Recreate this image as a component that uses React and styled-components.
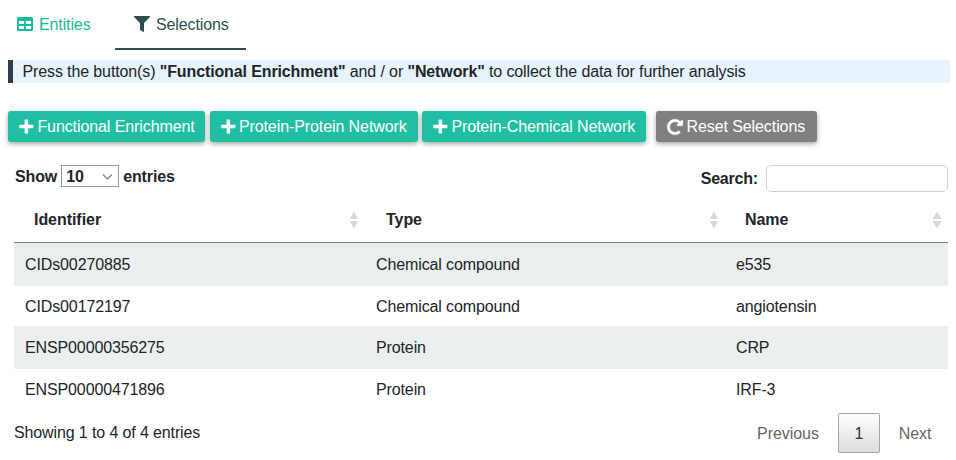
import React from 'react';
import styled, { createGlobalStyle } from 'styled-components';
import { FaFilter, FaRedoAlt } from 'react-icons/fa';

const GlobalStyle = createGlobalStyle`
  *, *::before, *::after { box-sizing: border-box; }
  body {
    margin: 0;
    background: #fff;
    color: #212529;
    font: 16px/24px "Liberation Sans", Arial, sans-serif;
    letter-spacing: -0.12px;
  }
`;

const Page = styled.main`
  width: 956px;
  height: 460px;
  overflow: hidden;
  padding-right: 6px;
  padding-left: 8px;
`;

const Tabs = styled.nav`
  display: flex;
  height: 50px;
`;

const Tab = styled.a`
  display: flex;
  align-items: center;
  gap: 6px;
  width: ${(p) => p.$width}px;
  padding: 1px 0 0 ${(p) => p.$inset}px;
  border-bottom: 2.5px solid ${(p) => (p.$active ? '#2f4f4f' : 'transparent')};
  color: ${(p) => (p.$active ? '#2f4f4f' : '#18bc9c')};
  svg { flex: none; margin-bottom: 1px; }
`;

const Notice = styled.p`
  height: 23px;
  margin: 10px 0 28px;
  padding-left: 9.5px;
  border-left: 5px solid #2c3e50;
  background: #e7f3fe;
  line-height: 23px;
  white-space: pre;
`;

const Actions = styled.div`
  display: flex;
  gap: 4.5px;
`;

const Button = styled.button`
  display: flex;
  align-items: center;
  gap: ${(p) => (p.$muted ? 4 : 3.4)}px;
  width: ${(p) => p.$width}px;
  height: 31px;
  margin: 0 0 0 ${(p) => p.$before || 0}px;
  padding: 0 0 0 11px;
  border: 0;
  border-radius: 3px;
  background: ${(p) => (p.$muted ? '#808080' : '#20bfa4')};
  box-shadow: 0 2px 5px rgba(0, 0, 0, 0.35);
  color: #fff;
  font: inherit;
  letter-spacing: -0.09px;
  white-space: nowrap;
  svg { flex: none; }
`;

const ResetIcon = styled(FaRedoAlt)`
  stroke: #fff;
  stroke-width: 14px;
  overflow: visible;
`;

const Controls = styled.div`
  display: flex;
  justify-content: space-between;
  height: 54px;
  padding: 23px 2px 0 7px;
  font-weight: 700;
`;

const Length = styled.label`
  display: flex;
  gap: 4px;
  height: 24px;
`;

const Select = styled.span`
  display: flex;
  align-items: center;
  justify-content: space-between;
  width: 58px;
  height: 22px;
  padding: 1px 5px 0 4px;
  border: 1px solid #999;
`;

const Search = styled.label`
  display: flex;
  align-items: center;
  gap: 8px;
  height: 27px;
  letter-spacing: -0.2px;
`;

const SearchInput = styled.input`
  width: 182px;
  height: 27px;
  border: 1px solid #ced4da;
  border-radius: 5px;
  background: #fff;
  font: inherit;
`;

const Table = styled.table`
  width: 934px;
  margin-left: 6px;
  border-collapse: separate;
  border-spacing: 0;
  table-layout: fixed;
`;

const HeadCell = styled.th`
  width: ${(p) => p.$width}px;
  height: 47px;
  padding: 1px 6px 0 ${(p) => p.$inset}px;
  border-bottom: 1px solid #808080;
  text-align: left;
  letter-spacing: -0.05px;
`;

const HeadContent = styled.div`
  display: flex;
  align-items: center;
  justify-content: space-between;
`;

const Row = styled.tr`
  height: ${(p) => p.$height}px;
  background: ${(p) => (p.$striped ? '#ebefef' : '#fff')};
`;

const Cell = styled.td`
  padding: ${(p) => (p.$striped ? 0 : 2)}px 11px 0;
`;

const Footer = styled.footer`
  display: flex;
  justify-content: space-between;
  padding: 4px 2px 0 6px;
`;

const Info = styled.div`
  padding-top: 8px;
`;

const Pager = styled.div`
  display: flex;
  color: #666;
  letter-spacing: -0.05px;
`;

const PageLink = styled.a`
  width: ${(p) => p.$width}px;
  height: 40px;
  line-height: 42px;
  text-align: center;
`;

const CurrentPage = styled(PageLink)`
  margin: 0 2px;
  border: 1px solid #a5a5a5;
  border-radius: 2px;
  background: linear-gradient(#fff, #dcdcdc);
  line-height: 40px;
  color: #333;
`;

const TableIcon = () => (
  <svg width="16" height="14" viewBox="0 0 16 14">
    <path
      fill="currentColor"
      fillRule="evenodd"
      d="M1.5 0h13A1.5 1.5 0 0 1 16 1.5v11a1.5 1.5 0 0 1-1.5 1.5h-13A1.5 1.5 0 0 1 0 12.5v-11A1.5 1.5 0 0 1 1.5 0zM1.9 3.900v3.200h5.200v-3.200zM8.900 3.900v3.200h5.200v-3.200zM1.900 8.900v3.200h5.200v-3.200zM8.900 8.900v3.200h5.200v-3.200z"
    />
  </svg>
);

const PlusIcon = () => (
  <svg width="15" height="15" viewBox="0 0 15 15" fill="currentColor">
    <rect x="0.2" y="5.7" width="14.2" height="3.5" rx="0.8" />
    <rect x="5.6" y="0.4" width="3.5" height="14.2" rx="0.8" />
  </svg>
);

const SortIcon = () => (
  <svg width="10" height="18" viewBox="0 0 10 18" fill="#d8d9db">
    <path d="M5 .5 9.5 8h-9zM5 17.5 .5 10h9z" />
  </svg>
);

const Chevron = () => (
  <svg width="11" height="8" viewBox="0 0 11 8" fill="none" stroke="#8a8a8a" strokeWidth="1.3">
    <path d="m1 1.5 4.5 4.500L10 1.500" />
  </svg>
);

const columns = [
  { label: 'Identifier', width: 351, inset: 20 },
  { label: 'Type', width: 360, inset: 21 },
  { label: 'Name', width: 223, inset: 20 },
];

const rows = [
  { height: 43, cells: ['CIDs00270885', 'Chemical compound', 'e535'] },
  { height: 40, cells: ['CIDs00172197', 'Chemical compound', 'angiotensin'] },
  { height: 43, cells: ['ENSP00000356275', 'Protein', 'CRP'] },
  { height: 40, cells: ['ENSP00000471896', 'Protein', 'IRF-3'] },
];

export default function App() {
  return (
    <>
      <GlobalStyle />
      <Page>
        <Tabs>
          <Tab $width={107} $inset={9}><TableIcon />Entities</Tab>
          <Tab $width={131} $inset={19} $active><FaFilter size={16} />Selections</Tab>
        </Tabs>
        <Notice>
          Press the button(s) <b>"Functional Enrichment"</b> and / or <b>"Network"</b> to collect the data for further analysis
        </Notice>
        <Actions>
          <Button $width={197}><PlusIcon />Functional Enrichment</Button>
          <Button $width={208}><PlusIcon />Protein-Protein Network</Button>
          <Button $width={224}><PlusIcon />Protein-Chemical Network</Button>
          <Button $width={161} $before={5} $muted><ResetIcon size={16} />Reset Selections</Button>
        </Actions>
        <Controls>
          <Length>Show<Select>10<Chevron /></Select>entries</Length>
          <Search>Search:<SearchInput /></Search>
        </Controls>
        <Table>
          <thead>
            <tr>
              {columns.map((c) => (
                <HeadCell key={c.label} $width={c.width} $inset={c.inset}>
                  <HeadContent>{c.label}<SortIcon /></HeadContent>
                </HeadCell>
              ))}
            </tr>
          </thead>
          <tbody>
            {rows.map((row, i) => (
              <Row key={row.cells[0]} $height={row.height} $striped={i % 2 === 0}>
                {row.cells.map((text) => <Cell key={text} $striped={i % 2 === 0}>{text}</Cell>)}
              </Row>
            ))}
          </tbody>
        </Table>
        <Footer>
          <Info>Showing 1 to 4 of 4 entries</Info>
          <Pager>
            <PageLink $width={96}>Previous</PageLink>
            <CurrentPage $width={42}>1</CurrentPage>
            <PageLink $width={66}>Next</PageLink>
          </Pager>
        </Footer>
      </Page>
    </>
  );
}
